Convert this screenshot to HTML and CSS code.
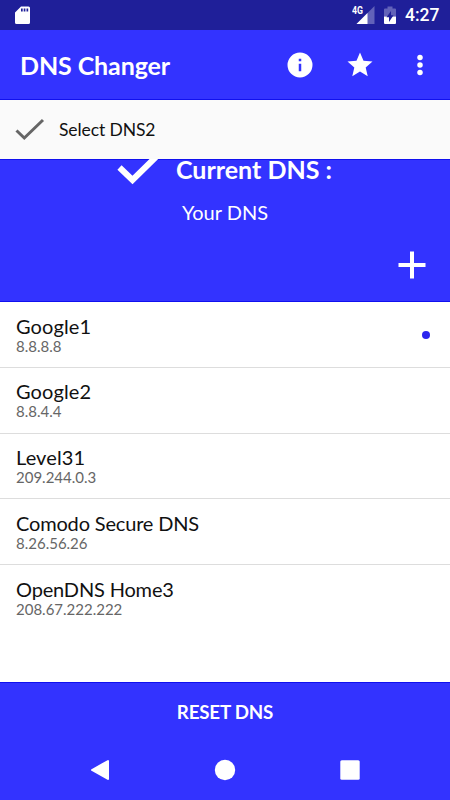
FILE: index.html
```html
<!DOCTYPE html>
<html lang="en">
<head>
<meta charset="utf-8">
<title>DNS Changer</title>
<link rel="stylesheet" href="styles.css">
</head>
<body>
<div class="screen">
  <div class="status">
    <svg class="sd" width="15" height="19" viewBox="0 0 15 19"><path fill="#fff" fill-rule="evenodd" d="M6 .5h7.500Q15 .5 15 2v14.500Q15 18 13.500 18h-12Q0 18 0 16.500V6.500zM6 2.500v3h1.700v-3zM8.700 2.500v3h1.700v-3zM11.500 2.500v3h1.700v-3z"/></svg>
    <svg class="signal" width="24" height="20" viewBox="0 0 24 20"><path fill="#6262b9" d="M22.500 1v18h-18z"/><path fill="#fff" d="M15.500 8v11h-11z"/><text class="network" x="0" y="9" textLength="11" lengthAdjust="spacingAndGlyphs">4G</text></svg>
    <svg class="battery" width="12" height="19" viewBox="0 0 12 19"><path fill="#6262b9" d="M3.500 .5h5v2H11q1 0 1 1v7H0V3.500q0-1 1-1h2.500z"/><path fill="#fff" d="M0 10.500h12V17q0 1-1 1H1q-1 0-1-1z"/><path fill="#1f1f99" d="M7 5v4.300h2.500L5 16v-4.800H2.500z"/></svg>
    <span class="clock">4:27</span>
  </div>
  <header class="appbar">
    <h1 class="title">DNS Changer</h1>
    <div class="actions">
      <svg width="30" height="30" viewBox="0 0 24 24"><path fill="#fff" d="M12 2a10 10 0 1 0 0 20 10 10 0 0 0 0-20zm1 15h-2v-6h2zm0-8h-2V7h2z"/></svg>
      <svg width="30" height="30" viewBox="0 0 24 24"><path fill="#fff" d="M12 17.270 18.180 21l-1.640-7.030L22 9.240l-7.190-.61L12 2 9.190 8.630 2 9.240l5.460 4.730L5.820 21z"/></svg>
      <svg width="30" height="30" viewBox="0 0 24 24"><g fill="#fff"><circle cx="12" cy="6" r="2.200"/><circle cx="12" cy="12" r="2.200"/><circle cx="12" cy="18" r="2.200"/></g></svg>
    </div>
  </header>
  <div class="select">
    <svg width="30" height="24" viewBox="0 0 30 24"><path fill="none" stroke="#666" stroke-width="3" d="M1.500 12.500l7.800 7.500L28 2"/></svg>
    <span class="select-label">Select DNS2</span>
  </div>
  <section class="current">
    <div class="current-head">
      <svg class="current-check" width="44" height="36" viewBox="0 0 44 36"><path fill="none" stroke="#fff" stroke-width="6" d="M2.500 16.500l13 12.500L42 3"/></svg>
      <h2 class="current-title">Current DNS :</h2>
    </div>
    <p class="current-value">Your DNS</p>
    <svg class="add" width="28" height="28" viewBox="0 0 28 28"><path fill="none" stroke="#fff" stroke-width="4" d="M14 .5v27M.5 14h27"/></svg>
  </section>
  <main class="list">
    <div class="row"><div><div class="name short">Google1</div><div class="address">8.8.8.8</div></div><i class="dot"></i></div>
    <div class="row"><div><div class="name short">Google2</div><div class="address">8.8.4.4</div></div></div>
    <div class="row"><div><div class="name short">Level31</div><div class="address">209.244.0.3</div></div></div>
    <div class="row"><div><div class="name">Comodo Secure DNS</div><div class="address">8.26.56.26</div></div></div>
    <div class="row"><div><div class="name">OpenDNS Home3</div><div class="address">208.67.222.222</div></div></div>
  </main>
  <div class="reset">RESET DNS</div>
  <nav class="nav">
    <svg width="24" height="24" viewBox="0 0 24 24"><path fill="#fff" stroke="#fff" stroke-width="2" stroke-linejoin="round" d="M20 3v18L4 12z"/></svg>
    <svg width="24" height="24" viewBox="0 0 24 24"><circle cx="12" cy="12" r="10.200" fill="#fff"/></svg>
    <svg width="24" height="24" viewBox="0 0 24 24"><rect x="2.300" y="2.300" width="19.400" height="19.400" rx="1.500" fill="#fff"/></svg>
  </nav>
</div>
</body>
</html>
```
FILE: styles.css
```css
* { box-sizing: border-box; }
body, h1, h2, p { margin: 0; }
svg { display: block; flex: none; }
.screen {
  width: 450px;
  height: 800px;
  display: flex;
  flex-direction: column;
  overflow: hidden;
  background: #fff;
  color: #111;
  font-family: Lato, sans-serif;
  white-space: nowrap;
}
.screen > * { flex: none; }
.status {
  height: 30px;
  display: flex;
  align-items: center;
  padding: 0 11px 0 15px;
  background: #1f1f99;
  color: #fff;
}
.signal { margin-left: auto; }
.network { font: 700 10px Roboto, sans-serif; fill: #fff; }
.battery { margin-left: 8px; }
.clock { width: 34px; margin-left: 9px; font: 500 17.5px/30px Roboto, sans-serif; }
.appbar {
  height: 70px;
  display: flex;
  align-items: center;
  justify-content: space-between;
  padding: 0 15px 0 20px;
  background: #33f;
  border-bottom: 1px solid #1010ef;
  color: #fff;
}
.title { font-size: 25px; font-weight: 700; line-height: 30px; letter-spacing: -0.1px; }
.actions { display: flex; gap: 30px; }
.select {
  position: relative;
  z-index: 1;
  height: 59px;
  display: flex;
  align-items: center;
  gap: 14px;
  padding-left: 15px;
  background: #fafafa;
}
.select-label { font-size: 17.5px; letter-spacing: -0.1px; }
.current {
  height: 143px;
  display: flex;
  flex-direction: column;
  background: #33f;
  border-top: 1px solid #1010ef;
  border-bottom: 1px solid #1010ef;
  color: #fff;
}
.current-head {
  display: flex;
  height: 36px;
  align-items: center;
  gap: 15px;
  margin: -9px 0 0 117px;
}
.current-title { font-size: 25px; line-height: 30px; }
.current-value { margin-top: 13px; font-size: 20px; line-height: 24px; text-align: center; }
.add { align-self: flex-end; margin: 27px 24px 0 0; }
.list { height: 380px; }
.row {
  height: 65.8px;
  display: flex;
  justify-content: space-between;
  padding: 11.5px 20px 0 16px;
  border-bottom: 1px solid #ddd;
}
.row:last-child { border-bottom: 0; }
.name { font-size: 20px; line-height: 24px; letter-spacing: -0.17px; }
.short { letter-spacing: 0.1px; }
.address { font-size: 15px; line-height: 16px; color: #666; }
.dot { width: 8px; height: 8px; margin-top: 17px; border-radius: 50%; background: #2c25ee; }
.reset {
  height: 58px;
  background: #33f;
  border-top: 1px solid #1010ef;
  color: #fff;
  font-size: 18.75px;
  font-weight: 700;
  letter-spacing: -0.2px;
  line-height: 57px;
  text-align: center;
}
.nav {
  height: 60px;
  display: flex;
  justify-content: space-between;
  align-items: center;
  padding: 0 88px;
  background: #33f;
}
```
